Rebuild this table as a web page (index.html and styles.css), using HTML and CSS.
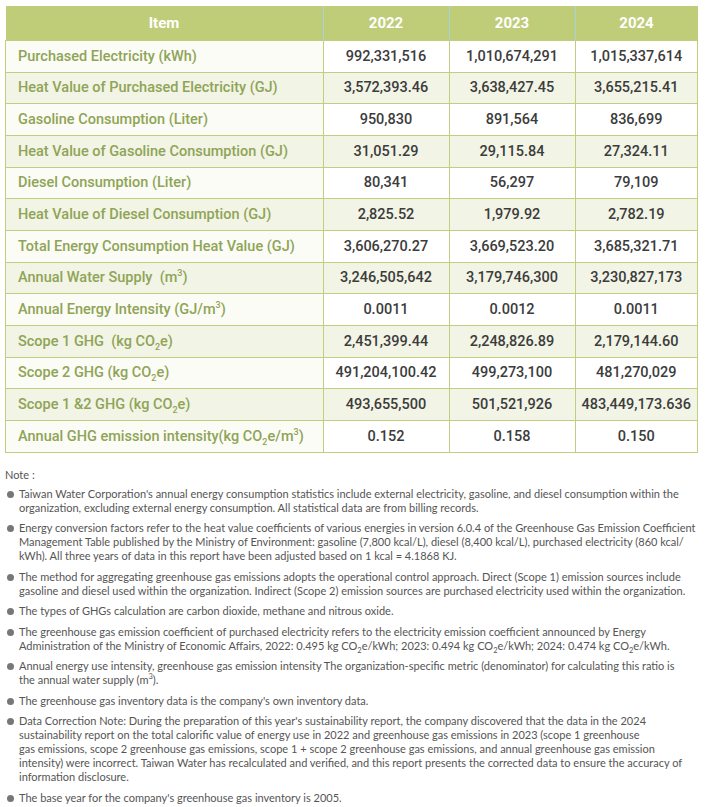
FILE: index.html
```html
<!DOCTYPE html>
<html>
<head>
<meta charset="utf-8">
<link rel="stylesheet" href="styles.css">
</head>
<body>
<table class="data">
  <thead>
    <tr><th class="item">Item</th><th>2022</th><th>2023</th><th>2024</th></tr>
  </thead>
  <tbody>
    <tr><td>Purchased Electricity (kWh)</td><td>992,331,516</td><td>1,010,674,291</td><td>1,015,337,614</td></tr>
    <tr><td>Heat Value of Purchased Electricity (GJ)</td><td>3,572,393.46</td><td>3,638,427.45</td><td>3,655,215.41</td></tr>
    <tr><td>Gasoline Consumption (Liter)</td><td>950,830</td><td>891,564</td><td>836,699</td></tr>
    <tr><td>Heat Value of Gasoline Consumption (GJ)</td><td>31,051.29</td><td>29,115.84</td><td>27,324.11</td></tr>
    <tr><td>Diesel Consumption (Liter)</td><td>80,341</td><td>56,297</td><td>79,109</td></tr>
    <tr><td>Heat Value of Diesel Consumption (GJ)</td><td>2,825.52</td><td>1,979.92</td><td>2,782.19</td></tr>
    <tr><td>Total Energy Consumption Heat Value (GJ)</td><td>3,606,270.27</td><td>3,669,523.20</td><td>3,685,321.71</td></tr>
    <tr><td>Annual Water Supply&nbsp;&nbsp;(m<sup>3</sup>)</td><td>3,246,505,642</td><td>3,179,746,300</td><td>3,230,827,173</td></tr>
    <tr><td>Annual Energy Intensity (GJ/m<sup>3</sup>)</td><td>0.0011</td><td>0.0012</td><td>0.0011</td></tr>
    <tr><td>Scope 1 GHG&nbsp;&nbsp;(kg CO<sub>2</sub>e)</td><td>2,451,399.44</td><td>2,248,826.89</td><td>2,179,144.60</td></tr>
    <tr><td>Scope 2 GHG (kg CO<sub>2</sub>e)</td><td>491,204,100.42</td><td>499,273,100</td><td>481,270,029</td></tr>
    <tr><td>Scope 1 &amp;2 GHG (kg CO<sub>2</sub>e)</td><td>493,655,500</td><td>501,521,926</td><td>483,449,173.636</td></tr>
    <tr><td>Annual GHG emission intensity(kg CO<sub>2</sub>e/m<sup>3</sup>)</td><td>0.152</td><td>0.158</td><td>0.150</td></tr>
  </tbody>
</table>
<div class="notes">
  <p class="note-title">Note :</p>
  <ul>
    <li>Taiwan Water Corporation's annual energy consumption statistics include external electricity, gasoline, and diesel consumption within the organization, excluding external energy consumption. All statistical data are from billing records.</li>
    <li>Energy conversion factors refer to the heat value coefficients of various energies in version 6.0.4 of the Greenhouse Gas Emission Coefficient Management Table published by the Ministry of Environment: gasoline (7,800 kcal/L), diesel (8,400 kcal/L), purchased electricity (860 kcal/ kWh). All three years of data in this report have been adjusted based on 1 kcal = 4.1868 KJ.</li>
    <li>The method for aggregating greenhouse gas emissions adopts the operational control approach. Direct (Scope 1) emission sources include gasoline and diesel used within the organization. Indirect (Scope 2) emission sources are purchased electricity used within the organization.</li>
    <li>The types of GHGs calculation are carbon dioxide, methane and nitrous oxide.</li>
    <li>The greenhouse gas emission coefficient of purchased electricity refers to the electricity emission coefficient announced by Energy Administration of the Ministry of Economic Affairs, 2022: 0.495 kg CO<sub>2</sub>e/kWh; 2023: 0.494 kg CO<sub>2</sub>e/kWh; 2024: 0.474 kg CO<sub>2</sub>e/kWh.</li>
    <li>Annual energy use intensity, greenhouse gas emission intensity The organization-specific metric (denominator) for calculating this ratio is the&nbsp;annual water supply (m<sup>3</sup>).</li>
    <li>The greenhouse gas inventory data is the company's own inventory data.</li>
    <li>Data Correction Note: During the preparation of this year's sustainability report, the company discovered that the data in the 2024 sustainability report on the total calorific value of energy use in 2022 and greenhouse gas emissions in 2023 (scope 1 greenhouse gas&nbsp;emissions, scope 2 greenhouse gas emissions, scope 1 + scope 2 greenhouse gas emissions, and annual greenhouse gas emission intensity) were incorrect. Taiwan Water has recalculated and verified, and this report presents the corrected data to ensure the accuracy of information disclosure.</li>
    <li>The base year for the company's greenhouse gas inventory is 2005.</li>
  </ul>
</div>
</body>
</html>
```
FILE: styles.css
```css
html, body {
  margin: 0;
  padding: 0;
  background: #ffffff;
}
body {
  padding: 6px 8px 0 5px;
}
.data {
  border-collapse: collapse;
  width: 693px;
  table-layout: fixed;
  font-family: Roboto, "Liberation Sans", sans-serif;
  font-weight: 500;
  font-size: 14.5px;
}
.data th {
  background: #bfcc78;
  color: #ffffff;
  font-weight: 700;
  font-size: 15px;
  height: 34px;
  padding: 0;
  text-align: center;
  border-left: 1px solid #a9d2df;
}
.data th.item {
  width: 317px;
  border-left: none;
}
.data th:nth-child(2), .data th:nth-child(3) { width: 125px; }
.data td {
  height: 31.67px;
  padding: 0;
  box-sizing: border-box;
  border: 1px solid #c3cd7f;
  text-align: center;
  color: #3c3c3c;
  white-space: nowrap;
}
.data td:first-child {
  text-align: left;
  padding-left: 12px;
  color: #8fa457;
}
.data tbody tr:nth-child(odd) td { background: #ffffff; }
.data tbody tr:nth-child(odd) td:first-child { background: #fbfcf5; }
.data tbody tr:nth-child(even) td { background: #f2f4e5; }
.data sup, .data sub {
  font-size: 9px;
  line-height: 0;
}
.notes {
  font-family: Lato, "Open Sans", sans-serif;
  font-size: 11px;
  line-height: 14px;
  color: #555555;
  margin-top: 15px;
}
.note-title {
  margin: 0 0 5px 0;
}
.notes ul {
  list-style: none;
  margin: 0;
  padding: 0;
}
.notes li {
  position: relative;
  padding-left: 14px;
  margin-bottom: 6.5px;
}
.notes li::before {
  content: "";
  position: absolute;
  left: 2px;
  top: 4px;
  width: 7px;
  height: 7px;
  border-radius: 50%;
  background: #777777;
}
.notes sup, .notes sub {
  font-size: 7.5px;
  line-height: 0;
}
```
